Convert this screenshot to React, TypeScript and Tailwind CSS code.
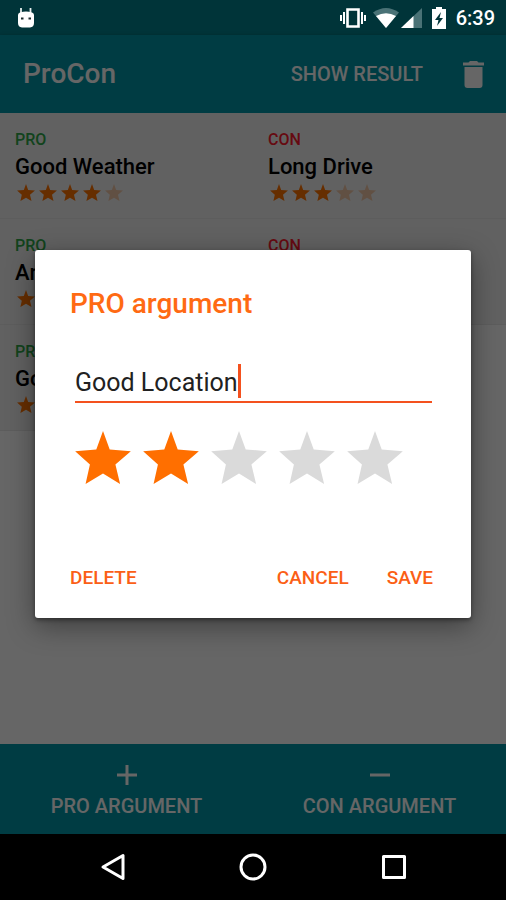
import { useState } from 'react'

type Side = 'PRO' | 'CON'

interface Argument {
  side: Side
  title: string
  stars: number
}

const PROS: Argument[] = [
  { side: 'PRO', title: 'Good Weather', stars: 4 },
  { side: 'PRO', title: 'Art', stars: 1 },
  { side: 'PRO', title: 'Good Location', stars: 2 },
]

const CONS: Argument[] = [
  { side: 'CON', title: 'Long Drive', stars: 3 },
  { side: 'CON', title: '', stars: 2 },
]

const RATINGS = [1, 2, 3, 4, 5]

function Star({ className }: { className: string }) {
  return (
    <svg viewBox="0 0 166 158" fill="currentColor" className={className} aria-hidden="true">
      <path d="M83 0L103 55L166 60L120 100L134 158L83 127L31 158L44 100L0 60L63 55Z" />
    </svg>
  )
}

function StatusBar() {
  return (
    <div className="flex h-[35px] items-center bg-[#003439] pr-[11px] pl-4 text-white">
      <svg viewBox="0 0 20 22" className="h-[22px] w-5" aria-hidden="true">
        <path d="M5 1v5M14.500 1v5" stroke="#e6eeee" strokeWidth="1.800" />
        <path d="M4 5.500Q10 3.500 16 5.500Q18 6 18 8v8q0 4-4 4.500H6Q2 20 2 16V8q0-2 2-2.500z" fill="#fff" />
        <path d="M5 11.500h2.500M12.500 11.500h2.500" stroke="#1c2b2d" strokeWidth="2" />
      </svg>
      <div className="ml-auto flex items-center">
        <svg viewBox="0 0 28 22" className="h-[22px] w-7" aria-hidden="true">
          <path d="M8.500 2.500h11v17h-11z" fill="none" stroke="#fff" strokeWidth="2.600" />
          <path d="M5 5v12M23 5v12M2 8v6M26 8v6" stroke="#fff" strokeWidth="2" />
        </svg>
        <svg viewBox="0 0 26 20" className="ml-1.5 h-5 w-[26px]" aria-hidden="true">
          <path d="M13 20L0 4.500Q13-4.500 26 4.500z" fill="#4a7276" />
          <path d="M13 20L3 8Q13 2.500 23 8z" fill="#fff" />
        </svg>
        <svg viewBox="0 0 21 20" className="ml-0.5 h-5 w-[21px]" aria-hidden="true">
          <path d="M0 20L21 0v20z" fill="#4a7276" />
          <path d="M0 20L12.500 8v12z" fill="#fff" />
        </svg>
        <svg viewBox="0 0 14 22" className="ml-2.5 h-[22px] w-3.5" aria-hidden="true">
          <path d="M4 0h6v2h4v20H0V2h4z" fill="#fff" />
          <path d="M9 5L3 13h3.500L5 19l6-8H7.500z" fill="#003439" />
        </svg>
        <span className="ml-2.5 text-xl leading-6 font-medium">6:39</span>
      </div>
    </div>
  )
}

function ArgumentRow({ argument }: { argument: Argument }) {
  return (
    <li className="border-b border-[#e8e8e8] bg-[#f2f2f2] px-[15px] pt-[17px] pb-[17px]">
      <p
        className={
          argument.side === 'PRO'
            ? 'text-base leading-5 font-medium text-[#2fa84a]'
            : 'text-base leading-5 font-medium text-[#ff1a2e]'
        }
      >
        {argument.side}
      </p>
      <h2 className="min-h-[34px] text-[22px] leading-[34px] font-medium text-black">{argument.title}</h2>
      <div className="flex gap-1 pl-0.5" role="img" aria-label={`${argument.stars} of 5 stars`}>
        {RATINGS.map((n) => (
          <Star
            key={n}
            className={n <= argument.stars ? 'h-[17px] w-[18px] text-[#ff7300]' : 'h-[17px] w-[18px] text-[#f3c8a8]'}
          />
        ))}
      </div>
    </li>
  )
}

function ArgumentDialog() {
  const [title, setTitle] = useState('Good Location')
  const [rating, setRating] = useState(2)

  return (
    <div
      role="dialog"
      aria-modal="true"
      aria-labelledby="dialog-title"
      className="w-full rounded-[3px] bg-white pt-9 pr-[34px] pb-[15px] pl-[35px] shadow-[0_8px_28px_rgba(0,0,0,0.4),0_2px_4px_rgba(0,0,0,0.4)]"
    >
      <h2 id="dialog-title" className="text-[28px] leading-9 font-medium text-[#ff6a13]">
        PRO argument
      </h2>
      <div className="mx-[5px] mt-[42px] flex border-b-2 border-[#f4511e] pb-[3px]">
        <input
          type="text"
          aria-label="Argument"
          value={title}
          onChange={(e) => setTitle(e.target.value)}
          className="field-sizing-content h-[34px] pt-1 text-[25px] text-[#212121] caret-transparent outline-none"
        />
        <span className="w-[3px] bg-[#f4511e]" />
      </div>
      <fieldset className="mx-[5px] mt-7 flex gap-3" aria-label="Rating">
        {RATINGS.map((n) => (
          <label key={n} className="relative cursor-pointer">
            <input
              type="radio"
              name="rating"
              aria-label={`${n} stars`}
              checked={rating === n}
              onChange={() => setRating(n)}
              className="sr-only"
            />
            <Star
              className={n <= rating ? 'h-[53px] w-14 text-[#ff6f00]' : 'h-[53px] w-14 text-[#dadada]'}
            />
          </label>
        ))}
      </fieldset>
      <div className="mt-[71px] flex h-12 items-center pr-1 text-[19px] font-medium text-[#fb5f16]">
        <button type="button">DELETE</button>
        <button type="button" className="mr-[38px] ml-auto">
          CANCEL
        </button>
        <button type="button">SAVE</button>
      </div>
    </div>
  )
}

function NavBar() {
  return (
    <nav className="flex h-[66px] items-center justify-center gap-[112px] bg-black text-white">
      <button type="button" aria-label="Back">
        <svg viewBox="0 0 28 28" className="size-7" fill="none" stroke="currentColor" strokeWidth="3" strokeLinejoin="round">
          <path d="M24 2.500v23L4 14z" />
        </svg>
      </button>
      <button type="button" aria-label="Home">
        <svg viewBox="0 0 28 28" className="size-7" fill="none" stroke="currentColor" strokeWidth="3">
          <circle cx="14" cy="14" r="12" />
        </svg>
      </button>
      <button type="button" aria-label="Recent apps">
        <svg viewBox="0 0 28 28" className="size-7" fill="none" stroke="currentColor" strokeWidth="3" strokeLinejoin="round">
          <path d="M4.500 3.500h21v21h-21z" />
        </svg>
      </button>
    </nav>
  )
}

export default function App() {
  return (
    <div className="flex min-h-screen flex-col bg-black font-[Roboto,sans-serif]">
      <StatusBar />
      <div className="relative flex flex-1 flex-col bg-white">
        <header className="flex h-[78px] items-center bg-[#0097a7] pr-[22px] pl-[23px] text-white shadow-[0_1px_4px_rgba(0,0,0,0.3)]">
          <h1 className="text-[28px] font-medium">ProCon</h1>
          <button type="button" className="mr-10 ml-auto text-[20px] font-medium">
            SHOW RESULT
          </button>
          <button type="button" aria-label="Delete all">
            <svg viewBox="0 0 21 27" className="h-[27px] w-[21px]" fill="currentColor">
              <path d="M0 1.500h5.500L7 0h7l1.500 1.500H21v3H0zM1.500 6h18v18a3 3 0 0 1-3 3h-12a3 3 0 0 1-3-3z" />
            </svg>
          </button>
        </header>
        <main className="grid flex-1 grid-cols-2 items-start">
          <ul>
            {PROS.map((argument) => (
              <ArgumentRow key={argument.title} argument={argument} />
            ))}
          </ul>
          <ul>
            {CONS.map((argument) => (
              <ArgumentRow key={argument.title} argument={argument} />
            ))}
          </ul>
        </main>
        <footer className="grid h-[90px] grid-cols-2 bg-[#0097a7] text-[20px] leading-6 font-medium text-white">
          <button type="button" className="flex flex-col items-center pt-5">
            <svg viewBox="0 0 22 22" className="size-[22px]" stroke="currentColor" strokeWidth="3" aria-hidden="true">
              <path d="M11 1v20M1 11h20" />
            </svg>
            <span className="mt-2">PRO ARGUMENT</span>
          </button>
          <button type="button" className="flex flex-col items-center pt-5">
            <svg viewBox="0 0 22 22" className="size-[22px]" stroke="currentColor" strokeWidth="3" aria-hidden="true">
              <path d="M1 11h20" />
            </svg>
            <span className="mt-2">CON ARGUMENT</span>
          </button>
        </footer>
        <div className="absolute inset-0 flex items-center justify-center bg-black/60 px-[35px] pb-0.5">
          <ArgumentDialog />
        </div>
      </div>
      <NavBar />
    </div>
  )
}
